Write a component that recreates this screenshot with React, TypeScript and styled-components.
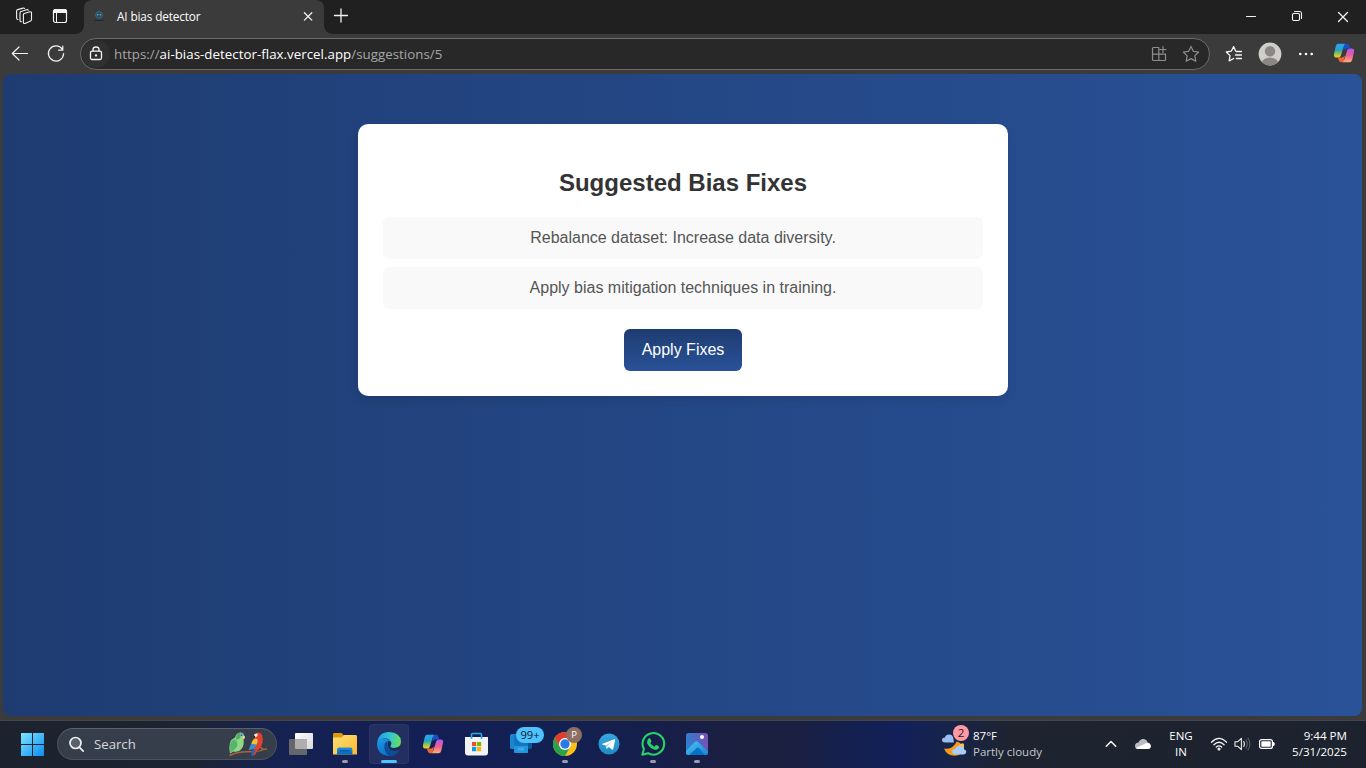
import React from 'react';
import styled, { createGlobalStyle } from 'styled-components';

const GlobalStyle = createGlobalStyle`
  * { box-sizing: border-box; }
  html, body { margin: 0; padding: 0; }
  body { width: 1366px; height: 768px; overflow: hidden; background: #3b3b3b; }
`;

const ui = `'Segoe UI', 'Open Sans', 'Noto Sans', sans-serif`;

const Desktop = styled.div`
  width: 1366px;
  height: 768px;
  display: flex;
  flex-direction: column;
  overflow: hidden;
  font-family: ${ui};
  color: #fff;
`;

const Svg = styled.svg`
  display: block;
  flex: none;
  overflow: visible;
`;

const Label = styled.span<{ $size: number; $spacing?: number; $color?: string; $line?: number }>`
  font-size: ${p => p.$size}px;
  letter-spacing: ${p => p.$spacing ?? 0}px;
  color: ${p => p.$color ?? '#fff'};
  line-height: ${p => p.$line ?? 16}px;
  white-space: nowrap;
`;

/* ---------- Browser window ---------- */

const TabStrip = styled.header`
  height: 34px;
  flex: none;
  display: flex;
  align-items: flex-start;
  background: #202020;
`;

const StripCell = styled.div<{ $w: number }>`
  width: ${p => p.$w}px;
  height: 32px;
  display: flex;
  align-items: center;
  justify-content: center;
`;

const Tab = styled.div`
  position: relative;
  width: 240px;
  height: 34px;
  display: flex;
  align-items: center;
  padding: 0 4px 2px 9px;
  background: #3b3b3b;
  border-radius: 8px 8px 0 0;
  &::before, &::after {
    content: '';
    position: absolute;
    bottom: 0;
    width: 8px;
    height: 8px;
  }
  &::before { left: -8px; background: radial-gradient(circle at 0 0, transparent 7.5px, #3b3b3b 8px); }
  &::after { right: -8px; background: radial-gradient(circle at 100% 0, transparent 7.5px, #3b3b3b 8px); }
`;

const TabTitle = styled(Label)`
  flex: 1;
  padding-left: 12px;
`;

const Spacer = styled.div`
  flex: 1;
`;

const Toolbar = styled.nav`
  height: 40px;
  flex: none;
  display: flex;
  align-items: center;
  padding: 0 10px 0 8px;
  background: #3b3b3b;
`;

const NavGroup = styled.div`
  display: flex;
  gap: 12px;
  margin-right: 12px;
`;

const AddressBar = styled.div`
  width: 1130px;
  height: 32px;
  display: flex;
  align-items: center;
  padding: 0 5px 0 1px;
  border: 1px solid #6b6b6b;
  border-radius: 16px;
  background: #282828;
`;

const SiteInfo = styled.div`
  width: 28px;
  height: 28px;
  display: grid;
  place-items: center;
  border-radius: 14px;
  background: #303030;
`;

const Url = styled(Label)`
  padding-left: 4px;
  flex: 1;
  b { font-weight: 400; color: #fff; }
`;

const BarActions = styled.div`
  display: flex;
  gap: 8px;
  margin-right: 1px;
`;

const ToolActions = styled.div`
  display: flex;
  gap: 12px;
  margin-left: 12px;
`;

const CopilotButton = styled.div`
  width: 26px;
  display: flex;
  justify-content: flex-end;
`;

const Viewport = styled.main`
  height: 646px;
  flex: none;
  padding: 0 4px 4px 3px;
  background: #3b3b3b;
`;

const Page = styled.div`
  height: 642px;
  display: flex;
  justify-content: center;
  align-items: flex-start;
  padding-top: 50px;
  border-radius: 8px;
  background: linear-gradient(to right, #1e3c72, #2a5298);
  font-family: Arial, 'Liberation Sans', sans-serif;
`;

/* ---------- Web page ---------- */

const Card = styled.section`
  width: 650px;
  height: 272px;
  margin-left: 1px;
  padding: 45px 25px 25px;
  display: flex;
  flex-direction: column;
  align-items: center;
  background: #fff;
  border-radius: 10px;
  box-shadow: 0 4px 10px rgba(0, 0, 0, 0.1);
`;

const Heading = styled.h2`
  margin: 0 0 20px;
  font-size: 24px;
  line-height: 28px;
  color: #333;
`;

const Fixes = styled.ul`
  width: 600px;
  margin: 0 0 20px;
  padding: 0;
  display: flex;
  flex-direction: column;
  gap: 8px;
  list-style: none;
`;

const Fix = styled.li`
  height: 42px;
  text-align: center;
  font-size: 16px;
  line-height: 42px;
  color: #555;
  background: #f9f9f9;
  border-radius: 6px;
`;

const ApplyButton = styled.button`
  width: 118px;
  height: 42px;
  padding: 0;
  border: 0;
  border-radius: 6px;
  background: linear-gradient(#1e3c72, #2a5298);
  color: #fff;
  font: 16px/42px Arial, 'Liberation Sans', sans-serif;
`;

/* ---------- Taskbar ---------- */

const Taskbar = styled.footer`
  height: 48px;
  flex: none;
  display: flex;
  align-items: center;
  padding: 0 19px 1px 12px;
  border-top: 1px solid #42464c;
  background: linear-gradient(90deg, #1c232e 0, #1c2431 190px, #162250 270px, #131f55 400px, #132052 560px, #161f4b 650px, #1b1f40 740px, #1b1f40 790px, #14204f 850px, #12205a 900px, #182447 955px, #1d232f 1010px, #1c232e 100%);
`;

const SearchBox = styled.div`
  width: 220px;
  height: 32px;
  margin-left: 5px;
  display: flex;
  align-items: center;
  padding: 0 8px 0 10px;
  border: 1px solid #4b515d;
  border-top-color: #5c626c;
  border-radius: 16px;
  background: #373e4b;
`;

const SearchText = styled(Label)`
  flex: 1;
  padding-left: 9px;
`;

const Apps = styled.div`
  display: flex;
  gap: 4px;
  margin-left: 4px;
`;

const AppSlot = styled.div<{ $active?: boolean }>`
  position: relative;
  width: 40px;
  height: 40px;
  display: grid;
  place-items: center;
  border-radius: 4px;
  background: ${p => (p.$active ? 'rgba(255,255,255,0.07)' : 'transparent')};
  box-shadow: ${p => (p.$active ? 'inset 0 0 0 1px rgba(255,255,255,0.04)' : 'none')};
`;

const Indicator = styled.i<{ $active?: boolean }>`
  position: absolute;
  bottom: 1px;
  left: ${p => (p.$active ? 12 : 17)}px;
  width: ${p => (p.$active ? 16 : 6)}px;
  height: 3px;
  border-radius: 2px;
  background: ${p => (p.$active ? '#4cc2ff' : '#979cb0')};
`;

const CountBadge = styled.span`
  position: absolute;
  left: 15px;
  top: 3px;
  width: 28px;
  height: 16px;
  border-radius: 8px;
  background: #4cc2ff;
  color: #10202c;
  font-size: 11.2px;
  line-height: 16px;
  text-align: center;
`;

const ProfileBadge = styled.span`
  position: absolute;
  left: 21px;
  top: 3px;
  width: 16px;
  height: 16px;
  border-radius: 8px;
  background: #8d6e63;
  color: #fff;
  font-size: 9.5px;
  line-height: 16px;
  text-align: center;
`;

const Weather = styled.div`
  position: relative;
  display: flex;
  align-items: center;
  margin-right: 50px;
`;

const WeatherText = styled.div`
  width: 76px;
  margin-left: 6px;
  display: flex;
  flex-direction: column;
`;

const AlertBadge = styled.span`
  position: absolute;
  left: 12px;
  top: -3px;
  width: 16px;
  height: 16px;
  border-radius: 8px;
  background: #ff99a4;
  color: #1c1c1c;
  font-size: 11.5px;
  line-height: 16px;
  text-align: center;
`;

const Stack = styled.div<{ $align: string; $w: number }>`
  width: ${p => p.$w}px;
  display: flex;
  flex-direction: column;
  align-items: ${p => p.$align};
`;

const Tray = styled.div`
  display: flex;
  align-items: center;
`;

const TrayCell = styled.div<{ $w: number }>`
  width: ${p => p.$w}px;
  display: flex;
  justify-content: center;
`;

/* ---------- Icons ---------- */

type IconProps = { children: React.ReactNode; size?: number; color?: string; width?: number };

const Line = ({ children, size = 24, color = '#f2f2f2', width = 1.2 }: IconProps) => (
  <Svg width={size} height={size} viewBox={`0 0 ${size} ${size}`} fill="none" stroke={color} strokeWidth={width} strokeLinecap="round" strokeLinejoin="round">
    {children}
  </Svg>
);

const Workspaces = () => (
  <Line width={1.1}>
    <path d="M11.4 10.6 Q11.4 9.8 12.2 9.500 L18 7.800 Q19.500 7.500 19.500 9 V15.600 Q19.500 16.500 18.600 16.900 L13 19.400 Q11.400 19.900 11.400 18.400 Z" />
    <path d="M9.600 17.800 Q8 17.800 8 16.400 V9 Q8 7.900 9 7.500 L14.600 5.700 Q15.900 5.400 16.200 6.300" />
    <path d="M6 15.500 Q4.600 15.400 4.600 14 V7.200 Q4.600 6 5.700 5.600 L11 4.100 Q12.200 3.900 12.600 4.600" />
  </Line>
);

const TabActions = () => (
  <Line>
    <rect x="5.5" y="5.5" width="13" height="13" rx="2" />
    <path d="M5.500 8.400V7.500a2 2 0 0 1 2-2h9a2 2 0 0 1 2 2v.9Z" fill="#f2f2f2" />
    <path d="M8.500 8.500v10" strokeWidth="1" />
  </Line>
);

const Favicon = () => (
  <Svg width="12" height="12" viewBox="0 0 12 12">
    <circle cx="6" cy="5" r="3.4" fill="#245064" stroke="#35687f" strokeWidth="1" />
    <circle cx="4.7" cy="4.8" r=".7" fill="#86b8cb" />
    <circle cx="7.3" cy="4.8" r=".7" fill="#86b8cb" />
    <path d="M1 10.400h10" stroke="#222b30" strokeWidth="1" />
  </Svg>
);

const Star = ({ color }: { color: string }) => (
  <Line color={color} width={1.2}>
    <path d="M12 4.400 14.300 9.300 19.600 10 15.800 13.800 16.800 19.200 12 16.600 7.200 19.200 8.200 13.800 4.400 10 9.700 9.300Z" />
  </Line>
);

const CopilotIcon = ({ id }: { id: string }) => (
  <Svg width="24" height="22" viewBox="0 0 24 24">
    <defs>
      <linearGradient id={id + 'a'} x1="0" y1="0" x2="0" y2="1">
        <stop offset="0" stopColor="#2aa5f5" />
        <stop offset=".45" stopColor="#25a5c4" />
        <stop offset=".75" stopColor="#a0c444" />
        <stop offset="1" stopColor="#ffd21c" />
      </linearGradient>
      <linearGradient id={id + 'b'} x1="0" y1="0" x2="0" y2="1">
        <stop offset="0" stopColor="#a85cf0" />
        <stop offset=".5" stopColor="#ec5c9c" />
        <stop offset="1" stopColor="#ffae6c" />
      </linearGradient>
    </defs>
    <path d="M12.500 2h3.200q1.600 0 2.100 1.700L18.800 7h-4.600L11 9Z" fill="#1b4fc8" />
    <path d="M11.500 22H8.700q-1.800 0-2.300-1.700L5.400 17h4.800L13 15Z" fill="#f0643c" />
    <path d="M5.600 2h8q-1.200.4-1.800 2.400L8.500 15q-.7 2-2.600 2H3.500Q.4 17 1.100 13.200L3 4.600Q3.700 2 5.600 2Z" fill={`url(#${id}a)`} />
    <path d="M18.400 22h-8q1.200-.4 1.800-2.400L15.500 9q.7-2 2.600-2h2.400q3.100 0 2.400 3.800L21 19.400Q20.300 22 18.400 22Z" fill={`url(#${id}b)`} />
  </Svg>
);

const Avatar = () => (
  <Svg width="24" height="24" viewBox="0 0 24 24">
    <clipPath id="avatarClip"><circle cx="12" cy="12" r="11.400" /></clipPath>
    <g clipPath="url(#avatarClip)">
      <rect width="24" height="24" fill="#d0cecb" />
      <circle cx="12" cy="9.200" r="5.200" fill="#8b8784" />
      <ellipse cx="12" cy="21" rx="8" ry="5.600" fill="#8b8784" />
    </g>
  </Svg>
);

const WindowsLogo = () => (
  <Svg width="24" height="24" viewBox="0 0 24 24">
    <defs>
      <linearGradient id="win" x1="0" y1="0" x2="1" y2="1">
        <stop offset="0" stopColor="#7fe6ff" />
        <stop offset="1" stopColor="#0a8cf2" />
      </linearGradient>
    </defs>
    <path d="M1 1h11v11H1zM13 1h11v11H13zM1 13h11v11H1zM13 13h11v11H13z" fill="url(#win)" />
  </Svg>
);

const Parrots = () => (
  <Svg width="40" height="26" viewBox="0 0 40 26">
    <path d="M2 24.200Q8 21.500 14 21T26 20.500 35 18.500L38.500 18M35 18.500 32.500 16" fill="none" stroke="#a8643a" strokeWidth="1.500" strokeLinecap="round" />
    <path d="M9.500 2.500Q13 .5 15.500 3 17 5.500 15.500 8.500 16.500 14 13.500 18 11 21.500 5.500 20.500L2 22.500Q.8 16 2 11.500 3.500 8 7 6.500 7.500 4 9.500 2.500Z" fill="#8ed888" />
    <path d="M2.300 12Q4 8.500 7 8.500 10.500 11 9 15.500 7 19.500 2.500 21.500 1.400 16 2.300 12Z" fill="#58b56d" />
    <path d="M8 6.500Q9 2 12.500 1.800L12.500 6Q11 9 8 8.500Z" fill="#4fae62" />
    <path d="M12.500 1.700Q15.600 1.400 16.400 5L13.500 4.800Z" fill="#6a9fd6" />
    <path d="M15 4.500 17 5.500Q17 7.500 15.800 8.500L14.500 6.500Z" fill="#e9d79a" />
    <path d="M26.500 3.500Q30-.3 33.500 3 35.300 6 34.500 11 34 15.500 30.500 18.500L27 20.500 24 15.500Z" fill="#e5402a" />
    <path d="M26 9.500Q22.500 12.500 20.500 19.500L26 17.500Q29.500 14.500 29.500 10.500Z" fill="#3f8ad0" />
    <path d="M26.500 7.500Q24 9.500 23.300 12.800L28.500 13.500Q30.300 10.500 29.300 8Z" fill="#f8bc35" />
    <path d="M24.500 18.500 22.800 25 25.500 24.500 28.500 18.500Z" fill="#2c62b3" />
    <path d="M27.500 18.500 25.500 24.500 27 24Q29 21 29.500 18Z" fill="#e5402a" />
    <path d="M26.500 3.500Q28 2 29.500 2.700L29.500 5 27.500 6.500 26 5.500Z" fill="#fff0df" />
    <path d="M25.500 4.500 27.300 5.200 26.500 8Q25 6.500 25.500 4.500Z" fill="#292929" />
    <circle cx="13.300" cy="4.300" r=".6" fill="#24432c" />
  </Svg>
);

const TaskView = () => (
  <Svg width="26" height="26" viewBox="0 0 26 26">
    <defs>
      <linearGradient id="tv" x1="0" y1="0" x2="1" y2="1"><stop stopColor="#fff" /><stop offset="1" stopColor="#d8d8d8" /></linearGradient>
    </defs>
    <rect x="7" y="2" width="18" height="16" rx="1" fill="url(#tv)" />
    <rect x="1" y="8" width="18" height="16" rx="1" fill="#66676a" />
    <path d="M7 8h12v10H8a1 1 0 0 1-1-1Z" fill="#aeaeae" />
  </Svg>
);

const Folder = () => (
  <Svg width="26" height="26" viewBox="0 0 26 26">
    <defs>
      <linearGradient id="fo" x1="0" y1="0" x2="1" y2="1"><stop stopColor="#ffe07a" /><stop offset="1" stopColor="#fbb829" /></linearGradient>
      <linearGradient id="fb" x1="0" y1="0" x2="0" y2="1"><stop stopColor="#1c91e0" /><stop offset="1" stopColor="#0a64b8" /></linearGradient>
    </defs>
    <path d="M1 3.400Q1 2 2.400 2H9q1 0 1.600 1L12 5v6H1Z" fill="#dc9a08" />
    <path d="M1 6.500h8.500L12 4h11.600Q25 4 25 5.400v18.200H1Z" fill="url(#fo)" />
    <path d="M5 23.600V18.500Q5 16.600 7 16.600h11.500q1.900 0 1.900 1.900v5.100Z" fill="url(#fb)" />
    <path d="M8.400 19.800h8.800" stroke="#0b5299" strokeWidth="1.300" strokeLinecap="round" />
  </Svg>
);

const Edge = () => (
  <Svg width="26" height="26" viewBox="0 0 26 26">
    <defs>
      <linearGradient id="e1" x1="0" y1=".4" x2="1" y2=".5"><stop stopColor="#239be8" /><stop offset=".5" stopColor="#32c4d6" /><stop offset="1" stopColor="#68df58" /></linearGradient>
      <linearGradient id="e2" x1="0" y1="0" x2=".7" y2="1"><stop stopColor="#1b9de6" /><stop offset="1" stopColor="#0b66c2" /></linearGradient>
    </defs>
    <path d="M1 13Q1.500 8 8 7.500 14 7.500 15.500 12L13 15 14.500 19 22.500 19.800Q19.500 25 13.400 25 1.500 24.500 1 13Z" fill="url(#e2)" />
    <path d="M1.100 12.300Q2.500 1 13 1q11.500.5 12 9.500Q25 17 18 17q-3.200 0-4-1.400 1.600-1.600 1.200-4Q13.500 7.200 8.500 7.300 3 7.600 1.100 12.300Z" fill="url(#e1)" />
    <path d="M8.600 13Q9.500 10.600 12.400 10 10 13.500 12.200 16.500q3 4 9.300 2.700 2.500-.8 1.500.5Q19.500 25 13.400 25 7.200 20.500 8.600 13Z" fill="#0d4d98" />
    <path d="M12.500 10Q15 9.500 15.300 12 15.200 14 14 15.500 14.500 17 18 17 21 17 23.200 15.800 24 16.800 23 18.700 19 21 14.500 18.700 10 15.500 12.500 10Z" fill="#1b2858" />
  </Svg>
);

const Store = () => (
  <Svg width="26" height="26" viewBox="0 0 26 26">
    <path d="M7.500 7V3.500q0-1 1-1h8q1 0 1 1V7" fill="none" stroke="#28a6e6" strokeWidth="1.600" />
    <path d="M1 6h23v15.500q0 3-3 3H4q-3 0-3-3Z" fill="#f3f3f3" />
    <path d="M7.500 6v2M17.500 6v2" stroke="#28a6e6" strokeWidth="1.600" />
    <path d="M8 11h4.200v4.200H8Z" fill="#ee4e24" /><path d="M13 11h4.200v4.200H13Z" fill="#7db700" />
    <path d="M8 16h4.200v4.200H8Z" fill="#009fe8" /><path d="M13 16h4.200v4.200H13Z" fill="#fbb400" />
  </Svg>
);

const PhoneStack = () => (
  <Svg width="26" height="26" viewBox="0 0 26 26">
    <path d="M2 4.500Q2 3 3.500 3H10V18H3.500Q2 18 2 16.500Z" fill="#1a86cf" />
    <path d="M18 8h6v8.500q0 1.500-1.500 1.500H18Z" fill="#0b5599" />
    <path d="M6 4h14v18H7.500Q6 22 6 20.500Z" fill="#1176c0" />
    <path d="M6 15h14v5.500q0 1.500-1.500 1.500h-11Q6 22 6 20.500Z" fill="#2396dc" />
    <path d="M10 16.500h6v3h-6Z" fill="#37aaf0" />
  </Svg>
);

const Chrome = () => (
  <Svg width="26" height="26" viewBox="0 0 26 26">
    <circle cx="13" cy="13" r="12" fill="#fbc116" />
    <path d="M2.600 7A12 12 0 0 0 13 25L18.200 16 13 13 7.800 16Z" fill="#2ba24c" />
    <path d="M2.600 7 7.800 16 13 7h10.400A12 12 0 0 0 2.600 7Z" fill="#e33b2e" />
    <circle cx="13" cy="13" r="6" fill="#fff" />
    <circle cx="13" cy="13" r="4.700" fill="#2979e8" />
  </Svg>
);

const Telegram = () => (
  <Svg width="26" height="26" viewBox="0 0 26 26">
    <defs><linearGradient id="tg" x1="0" y1="0" x2="0" y2="1"><stop stopColor="#34aadf" /><stop offset="1" stopColor="#1d8ac4" /></linearGradient></defs>
    <circle cx="13" cy="13" r="10.500" fill="url(#tg)" />
    <path d="M6.400 12.800 18.400 8.200Q19.300 8 19.100 9L17.200 18Q17 19 16 18.400L12.800 16 11.200 17.600Q10.600 18 10.400 17.200L9.600 14.400 6.400 13.400Q5.800 13.100 6.400 12.800Z" fill="#fff" />
    <path d="M9.800 14.400 16 10.400 11.300 15 11 17.400Z" fill="#a9cbe2" />
  </Svg>
);

const WhatsApp = () => (
  <Svg width="26" height="26" viewBox="0 0 26 26">
    <path d="M2.300 23.700 3.900 18A10.800 10.800 0 1 1 8 22.200Z" fill="none" stroke="#27d366" strokeWidth="2.100" strokeLinejoin="round" />
    <path d="M8.700 7.200h1.100q.4 0 .6.500l1 2.300q.1.400-.2.800l-.9 1.100q1.400 2.700 4.200 3.800l1.200-1.400q.3-.4.700-.2l2.400 1.200q.3.200.3.500-.1 2.400-2.500 2.900-2 .4-5.200-1.500-3-1.900-4.300-5Q6.500 9 8.700 7.200Z" fill="#27d366" />
  </Svg>
);

const Photos = () => (
  <Svg width="26" height="26" viewBox="0 0 26 26">
    <defs>
      <linearGradient id="p1" x1="0" y1=".6" x2="1" y2=".4"><stop stopColor="#2a80d2" /><stop offset="1" stopColor="#7552b4" /></linearGradient>
      <linearGradient id="p2" x1="0" y1="0" x2="1" y2="1"><stop stopColor="#4fc6f4" /><stop offset="1" stopColor="#0f7fd3" /></linearGradient>
      <clipPath id="pc"><rect x="2" y="2" width="22" height="22" rx="2.500" /></clipPath>
    </defs>
    <g clipPath="url(#pc)">
      <rect x="2" y="2" width="22" height="22" fill="url(#p1)" />
      <path d="M0 22 11 10.800Q12.500 9.500 14 10.800L26 22.500V26H0Z" fill="url(#p2)" />
      <path d="M4 25 12.800 17q1-.8 2 0L22 25Z" fill="#0872c4" />
      <circle cx="18" cy="6" r="2" fill="#fff" />
    </g>
  </Svg>
);

const WeatherIcon = () => (
  <Svg width="26" height="28" viewBox="0 0 26 28">
    <path d="M3 18.500q4 1 8-1.200 4-3 4.500-5.800 6.500 1.500 6.300 8-.8 6-8 6.200Q5.500 25.500 3 18.500Z" fill="#f79a1e" />
    <path d="M18 15q3.500-3 5-1v6h-5Z" fill="#fbc23c" />
    <path d="M4.500 12.500Q1 12.500 1 10 1 7.600 4 7.500 4.500 4.500 8 4.500q3.500 0 4.300 3.400L13 12.500Z" fill="#9abdf3" />
    <path d="M14.500 24.600q-3.300-.2-3.400-3 .3-2.600 3.200-2.600Q15.500 15.500 19 15.700q3.400.2 3.800 3.600 2.700.5 2.400 3-.4 2.300-3 2.300Z" fill="#a9ccfa" />
  </Svg>
);

const CloudTray = () => (
  <Svg width="18" height="14" viewBox="0 0 18 14">
    <path d="M4.500 5.500Q6 1.600 9.800 2q3 .4 4 3.500 3 .6 3 3.500 0 3-3.300 3H4Q1 12 1 8.800 1.200 5.800 4.500 5.500Z" fill="#b9bdc1" />
    <path d="M2 11 12.500 6q3.800 0 4.300 3 0 3-3.300 3H4Q2.800 12 2 11Z" fill="#fff" />
  </Svg>
);

const Wifi = () => (
  <Line size={18} width={1.3}>
    <path d="M1.500 7.200Q9-.6 16.500 7.200M3.900 9.700q5.100-5 10.200 0M6.300 12.100q2.700-2.500 5.400 0" />
    <circle cx="9" cy="14" r=".9" fill="#fff" />
  </Line>
);

const Volume = () => (
  <Line size={18} width={1.1}>
    <path d="M2 6.800h2.600L8.400 3.400v11.200L4.600 11.200H2Z" />
    <path d="M10.800 6.600q1.400 2.400 0 4.800" />
    <path d="M13 4.800q2.600 4.200 0 8.400M15 3.200q3.800 5.800 0 11.600" stroke="#5a606a" />
  </Line>
);

const Battery = () => (
  <Svg width="18" height="18" viewBox="0 0 18 18">
    <rect x="1.600" y="4.600" width="12.800" height="8.800" rx="2" fill="none" stroke="#fff" strokeWidth="1.200" />
    <rect x="3.300" y="6.300" width="9.400" height="5.400" rx=".6" fill="#fff" />
    <path d="M15 7h.5q1.300.4 1.300 2t-1.300 2H15Z" fill="#fff" />
  </Svg>
);

const apps: { icon: React.ReactNode; open?: boolean; active?: boolean; badge?: React.ReactNode }[] = [
  { icon: <TaskView /> },
  { icon: <Folder />, open: true },
  { icon: <Edge />, open: true, active: true },
  { icon: <CopilotIcon id="cpTask" /> },
  { icon: <Store /> },
  { icon: <PhoneStack />, badge: <CountBadge>99+</CountBadge> },
  { icon: <Chrome />, open: true, badge: <ProfileBadge>P</ProfileBadge> },
  { icon: <Telegram /> },
  { icon: <WhatsApp />, open: true },
  { icon: <Photos />, open: true },
];

const fixes = ['Rebalance dataset: Increase data diversity.', 'Apply bias mitigation techniques in training.'];

export default function App() {
  return (
    <Desktop>
      <GlobalStyle />
      <TabStrip>
        <StripCell $w={48}><Workspaces /></StripCell>
        <StripCell $w={24}><TabActions /></StripCell>
        <StripCell $w={12} />
        <Tab>
          <Favicon />
          <TabTitle $size={11.8} $spacing={-0.14}>AI bias detector</TabTitle>
          <Line width={1.3}><path d="M8.400 8.700l7.400 7.400M15.800 8.700l-7.400 7.400" /></Line>
        </Tab>
        <StripCell $w={34}><Line width={1.3}><path d="M12.500 5.500v13M6 12h13" transform="translate(-.5 -.500)" /></Line></StripCell>
        <Spacer />
        <StripCell $w={46}><Line width={1.1}><path d="M7.500 12.500h9" /></Line></StripCell>
        <StripCell $w={46}>
          <Line width={1.1}><rect x="7.500" y="9.500" width="7" height="7" rx="1.200" /><path d="M9.500 7.500h5.300Q16.500 7.500 16.500 9.500v5" /></Line>
        </StripCell>
        <StripCell $w={46}><Line width={1.3}><path d="M7.500 8.500l9 9M16.500 8.500l-9 9" /></Line></StripCell>
      </TabStrip>

      <Toolbar>
        <NavGroup>
          <Line width={1.2}><path d="M19.500 11.500H4.500M11 5 4.300 11.500 11 18" /></Line>
          <Line width={1.2}><path d="M18.300 7.200A7.600 7.600 0 1 0 19.600 11.500M18.800 4.200v4h-4.200" /></Line>
        </NavGroup>
        <AddressBar>
          <SiteInfo>
            <Line width={1.3}>
              <rect x="6.500" y="9.200" width="11" height="8.300" rx="1.500" />
              <path d="M9 9V7.500Q9 5 12 5t3 2.500V9" />
              <circle cx="12" cy="13.500" r=".5" fill="#fff" />
            </Line>
          </SiteInfo>
          <Url $size={13.3} $spacing={0.03} $color="#a6a6a6">https://<b>ai-bias-detector-flax.vercel.app</b>/suggestions/5</Url>
          <BarActions>
            <Line color="#8e8e8e" width={1.2}>
              <path d="M11.800 5.500H6.500q-1 0-1 1v11q0 1 1 1h11q1 0 1-1v-5.300h-13M11.800 5.500v13M16 4.500v6M13 7.500h6" />
            </Line>
            <Star color="#8e8e8e" />
          </BarActions>
        </AddressBar>
        <ToolActions>
          <Line width={1.3}>
            <path d="M13.500 8.600 11.600 4.600 9.300 9.200 4.300 10 8 13.600 7.200 18.800 11.700 16.500M14 9.500h5.500M13.500 13h6M14.500 16.500h5" />
          </Line>
          <Avatar />
          <Svg width="24" height="24" viewBox="0 0 24 24"><g fill="#fff"><circle cx="6.300" cy="12" r="1.300" /><circle cx="12" cy="12" r="1.300" /><circle cx="17.700" cy="12" r="1.300" /></g></Svg>
          <CopilotButton><CopilotIcon id="cpBar" /></CopilotButton>
        </ToolActions>
      </Toolbar>

      <Viewport>
        <Page>
          <Card>
            <Heading>Suggested Bias Fixes</Heading>
            <Fixes>{fixes.map(f => <Fix key={f}>{f}</Fix>)}</Fixes>
            <ApplyButton>Apply Fixes</ApplyButton>
          </Card>
        </Page>
      </Viewport>

      <Taskbar>
        <StripCell $w={40}><WindowsLogo /></StripCell>
        <SearchBox>
          <Svg width="17" height="17" viewBox="0 0 17 17" fill="none" stroke="#eceef0" strokeWidth="1.700" strokeLinecap="round">
            <circle cx="7.500" cy="7" r="5.500" fill="#5a616b" /><path d="m11.500 11.300 3.700 3.900" />
          </Svg>
          <SearchText $size={13.2} $color="#d7dadd">Search</SearchText>
          <Parrots />
        </SearchBox>
        <Apps>
          {apps.map((a, i) => (
            <AppSlot key={i} $active={a.active}>
              {a.icon}
              {a.open && <Indicator $active={a.active} />}
              {a.badge}
            </AppSlot>
          ))}
        </Apps>
        <Spacer />
        <Weather>
          <WeatherIcon />
          <AlertBadge>2</AlertBadge>
          <WeatherText>
            <Label $size={11.5}>87°F</Label>
            <Label $size={11.5} $color="#c4c7cc">Partly cloudy</Label>
          </WeatherText>
        </Weather>
        <Tray>
          <TrayCell $w={24}><Line size={18} width={1.6}><path d="M4.300 11.200 9 6.500l4.700 4.700" /></Line></TrayCell>
          <TrayCell $w={40}><CloudTray /></TrayCell>
          <TrayCell $w={36}>
            <Stack $w={30} $align="center"><Label $size={11.5}>ENG</Label><Label $size={11.5}>IN</Label></Stack>
          </TrayCell>
          <TrayCell $w={40}><Wifi /></TrayCell>
          <TrayCell $w={6}><Volume /></TrayCell>
          <TrayCell $w={44}><Battery /></TrayCell>
          <Stack $w={58} $align="flex-end"><Label $size={11.6}>9:44 PM</Label><Label $size={11.6}>5/31/2025</Label></Stack>
        </Tray>
      </Taskbar>
    </Desktop>
  );
}
